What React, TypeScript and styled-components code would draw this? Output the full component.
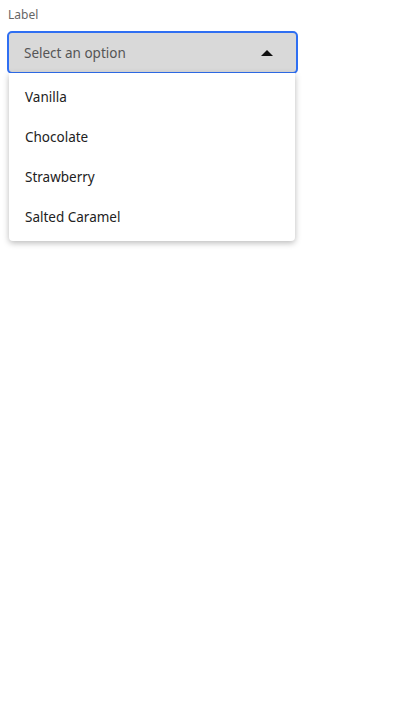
import React from 'react';
import styled, { createGlobalStyle } from 'styled-components';

const GlobalStyle = createGlobalStyle`
  html, body {
    margin: 0;
    padding: 0;
    background: #ffffff;
    font-family: 'Noto Sans', 'Open Sans', sans-serif;
  }
`;

const Field = styled.div`
  width: 291px;
  padding: 7px 0 20px 7px;
  display: flex;
  flex-direction: column;
`;

const Label = styled.label`
  font-size: 12px;
  line-height: 16px;
  color: #666666;
  padding-left: 1px;
  margin-bottom: 8px;
`;

const Trigger = styled.div`
  box-sizing: border-box;
  width: 291px;
  height: 43px;
  display: flex;
  align-items: center;
  justify-content: space-between;
  padding: 0 23px 0 15px;
  background: #d9d9d9;
  border: 2px solid #2f6ff2;
  border-radius: 5px;
  font-size: 13.5px;
  color: #555555;
`;

const Arrow = styled.span`
  width: 0;
  height: 0;
  border-left: 6px solid transparent;
  border-right: 6px solid transparent;
  border-bottom: 6px solid #111111;
`;

const Menu = styled.ul`
  width: 286px;
  box-sizing: border-box;
  margin: -1px 0 0 2px;
  padding: 4px 0;
  list-style: none;
  background: #ffffff;
  border-radius: 0 0 4px 4px;
  box-shadow: 0 2px 6px rgba(0, 0, 0, 0.28);
`;

const Option = styled.li`
  height: 40px;
  display: flex;
  align-items: center;
  padding-left: 16px;
  font-size: 13.5px;
  color: #222222;
`;

const options = ['Vanilla', 'Chocolate', 'Strawberry', 'Salted Caramel'];

const App = () => {
  return (
    <>
      <GlobalStyle />
      <Field>
        <Label>Label</Label>
        <Trigger>
          <span>Select an option</span>
          <Arrow />
        </Trigger>
        <Menu>
          {options.map((item) => (
            <Option key={item}>{item}</Option>
          ))}
        </Menu>
      </Field>
    </>
  );
};

export default App;
